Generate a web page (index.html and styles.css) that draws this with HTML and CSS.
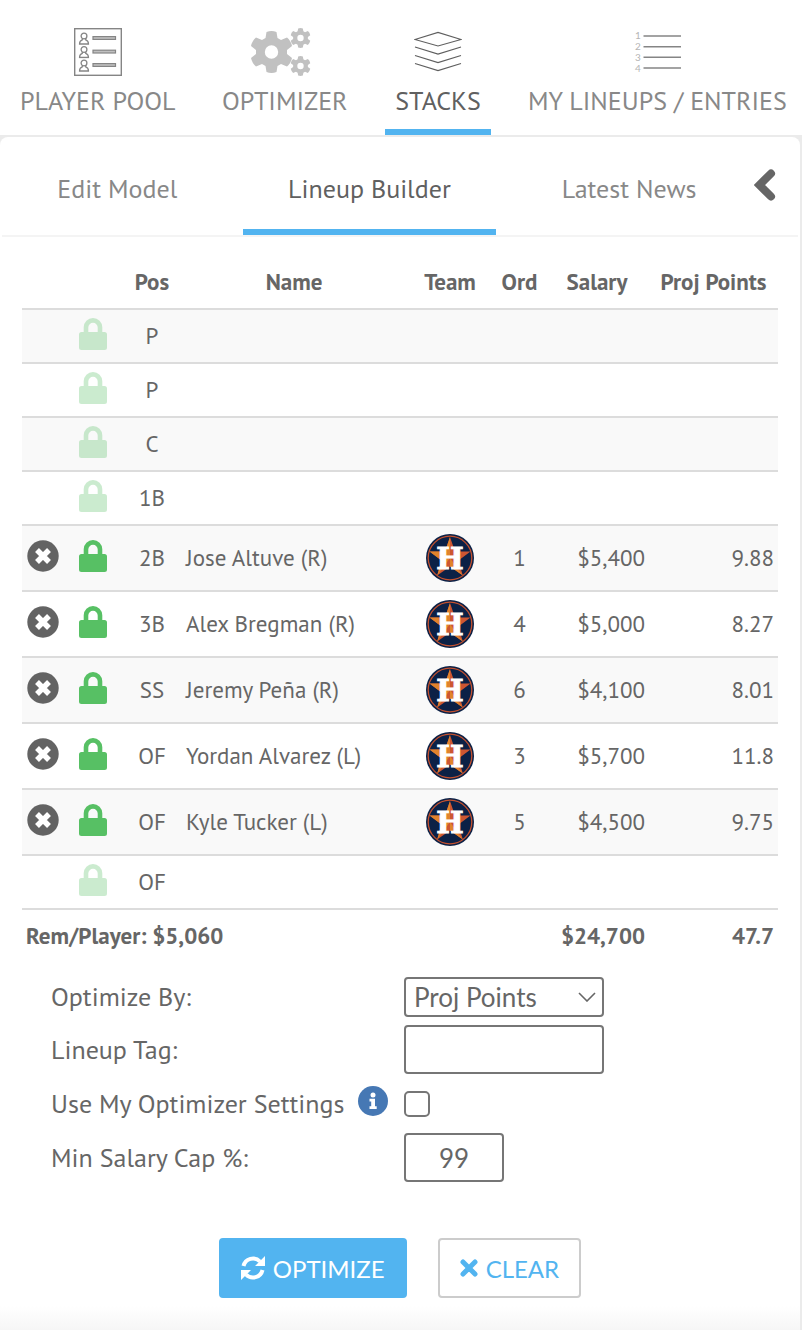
FILE: index.html
```html
<!DOCTYPE html>
<html lang="en">
<head>
    <meta charset="UTF-8">
    <meta name="viewport" content="width=device-width, initial-scale=1.0">
    <title>Stacks - Lineup Builder</title>
    <link rel="stylesheet" href="styles.css">
</head>
<body>
    <!-- Shared icons -->
    <svg class="icon-defs" aria-hidden="true">
        <symbol id="lock" viewBox="0 0 28 32">
            <path d="M2.500 14H4.700V9.300a9.300 9.300 0 0 1 18.600 0V14h2.200A2.500 2.500 0 0 1 28 16.500v13a2.500 2.500 0 0 1-2.500 2.500h-23A2.500 2.500 0 0 1 0 29.500v-13A2.500 2.500 0 0 1 2.500 14zM9.300 14h9.400V9.500a4.700 4.700 0 0 0-9.400 0z"/>
        </symbol>
        <symbol id="remove" viewBox="0 0 32 32">
            <circle cx="16" cy="16" r="15.700"/>
            <path d="M10 10l12 12M22 10l-12 12" stroke="#fff" stroke-width="5.500"/>
        </symbol>
        <symbol id="person" viewBox="0 0 11 13">
            <circle cx="5.500" cy="4" r="2.900"/>
            <path d="M3.800 6.500v1.300C1.800 8.500 1 9.500 1 12h9c0-2.500-.8-3.500-2.800-4.200V6.500"/>
        </symbol>
        <symbol id="gear" viewBox="0 0 40 42">
            <path fill-rule="evenodd" d="M15 1q5-2 10 0l1 6 3.500 2 6-2.500q4 3.500 5 8.500l-5 4v4l5 4q-1 5-5 8.500l-6-2.500-3.500 2-1 6q-5 2-10 0l-1-6-3.500-2-6 2.500q-4-3.500-5-8.500l5-4v-4l-5-4q1-5 5-8.500l6 2.500L14 7zM20 14.300a6.700 6.700 0 1 0 0 13.400 6.700 6.700 0 0 0 0-13.400z"/>
        </symbol>
    </svg>

    <nav class="main-nav">
        <a href="#" class="nav-item">
            <svg width="48" height="48" viewBox="0 0 48 48" fill="none" stroke="#858585">
                <rect x=".7" y=".7" width="46.600" height="46.600" stroke-width="1.400"/>
                <g stroke-width="1.300">
                    <use href="#person" x="4.500" y="4" width="11" height="13"/>
                    <use href="#person" x="4.500" y="17.500" width="11" height="13"/>
                    <use href="#person" x="4.500" y="31" width="11" height="13"/>
                </g>
                <g fill="#c0c0c0" stroke-width="1.200">
                    <rect x="19" y="8.600" width="22.500" height="2.800"/>
                    <rect x="19" y="22.200" width="22.500" height="2.800"/>
                    <rect x="19" y="35.600" width="22.500" height="2.800"/>
                </g>
            </svg>
            <span>PLAYER POOL</span>
        </a>
        <a href="#" class="nav-item">
            <svg width="68" height="48" viewBox="0 0 68 48" fill="#c1c1c1">
                <use href="#gear" x="0" y="3" width="41" height="42"/>
                <use href="#gear" x="39" y="0" width="21" height="20"/>
                <use href="#gear" x="39" y="28" width="21" height="20"/>
            </svg>
            <span>OPTIMIZER</span>
        </a>
        <a href="#" class="nav-item active">
            <svg width="48" height="48" viewBox="0 0 48 48" fill="none" stroke="#5f5f5f" stroke-width="1.200">
                <path d="M1 11.500L24 4.500l23 7-23 6.500zM1 19l23 7 23-7M1 27.500l23 7 23-7M1 35.500l23 7 23-7"/>
            </svg>
            <span>STACKS</span>
        </a>
        <a href="#" class="nav-item">
            <svg width="48" height="48" viewBox="0 0 48 48" stroke="#858585" stroke-width="1.600">
                <path d="M10.500 8H48M10.500 18.700H48M10.500 29.300H48M10.500 40H48"/>
                <g class="list-digits">
                    <text x="2" y="11">1</text>
                    <text x="2" y="22">2</text>
                    <text x="2" y="33">3</text>
                    <text x="2" y="44">4</text>
                </g>
            </svg>
            <span>MY LINEUPS / ENTRIES</span>
        </a>
    </nav>

    <main class="panel">
        <div class="tabs">
            <a href="#" class="tab">Edit Model</a>
            <a href="#" class="tab active">Lineup Builder</a>
            <a href="#" class="tab">Latest News</a>
            <button type="button" class="collapse" aria-label="Collapse panel">
                <svg width="22" height="34" viewBox="0 0 22 34" fill="none" stroke="#666" stroke-width="8">
                    <path d="M17 5.500L5.500 17 17 28.500" stroke-linecap="round"/>
                </svg>
            </button>
        </div>

        <table class="lineup">
            <colgroup>
                <col class="col-remove">
                <col class="col-lock">
                <col class="col-pos">
                <col>
                <col class="col-team">
                <col class="col-ord">
                <col class="col-salary">
                <col class="col-points">
            </colgroup>
            <thead>
                <tr>
                    <th></th>
                    <th></th>
                    <th>Pos</th>
                    <th>Name</th>
                    <th>Team</th>
                    <th>Ord</th>
                    <th>Salary</th>
                    <th>Proj Points</th>
                </tr>
            </thead>
            <tbody id="lineup-rows"></tbody>
            <tfoot>
                <tr>
                    <td colspan="6">Rem/Player: $5,060</td>
                    <td class="num">$24,700</td>
                    <td class="num">47.7</td>
                </tr>
            </tfoot>
        </table>

        <form class="settings">
            <label for="optimize-by">Optimize By:</label>
            <div class="select-wrap">
                <select id="optimize-by">
                    <option>Proj Points</option>
                </select>
                <svg class="caret" width="18" height="10" viewBox="0 0 18 10" fill="none" stroke="#666" stroke-width="1.600">
                    <path d="M1 1l8 8 8-8"/>
                </svg>
            </div>

            <label for="lineup-tag">Lineup Tag:</label>
            <input type="text" id="lineup-tag">

            <div class="label-info">
                <label for="use-settings">Use My Optimizer Settings</label>
                <svg class="info" width="30" height="30" viewBox="0 0 30 30">
                    <circle cx="15" cy="15" r="15" fill="#4678b4"/>
                    <circle cx="15" cy="9" r="2.500" fill="#fff"/>
                    <path d="M11.500 12.800h5.500v7.500h1.700V23h-7.200v-2.700h1.700v-4.800h-1.700z" fill="#fff"/>
                </svg>
            </div>
            <input type="checkbox" id="use-settings">

            <label for="min-salary">Min Salary Cap %:</label>
            <input type="text" id="min-salary" class="short" value="99">
        </form>

        <div class="actions">
            <button type="button" class="btn btn-primary">
                <svg width="24" height="24" viewBox="0 0 24 24" fill="none" stroke="#fff" stroke-width="4">
                    <path d="M2.500 10A9.700 9.700 0 0 1 19 5.500M21.500 14A9.700 9.700 0 0 1 5 18.500"/>
                    <path d="M24 0v10H14zM0 24V14h10z" fill="#fff" stroke="none"/>
                </svg>
                OPTIMIZE
            </button>
            <button type="button" class="btn btn-outline">
                <svg width="18" height="18" viewBox="0 0 18 18" fill="none" stroke="#52b4f0" stroke-width="5">
                    <path d="M3 3l12 12M15 3L3 15" stroke-linecap="round"/>
                </svg>
                CLEAR
            </button>
        </div>
    </main>

    <script>
        const lineup = [
            { pos: 'P' },
            { pos: 'P' },
            { pos: 'C' },
            { pos: '1B' },
            { pos: '2B', name: 'Jose Altuve (R)', ord: 1, salary: '$5,400', points: '9.88' },
            { pos: '3B', name: 'Alex Bregman (R)', ord: 4, salary: '$5,000', points: '8.27' },
            { pos: 'SS', name: 'Jeremy Peña (R)', ord: 6, salary: '$4,100', points: '8.01' },
            { pos: 'OF', name: 'Yordan Alvarez (L)', ord: 3, salary: '$5,700', points: '11.8' },
            { pos: 'OF', name: 'Kyle Tucker (L)', ord: 5, salary: '$4,500', points: '9.75' },
            { pos: 'OF' }
        ];

        const removeButton = '<button type="button" class="icon-btn remove" aria-label="Remove player"><svg width="32" height="32"><use href="#remove"/></svg></button>';
        const lockButton = '<button type="button" class="icon-btn lock" aria-label="Lock player"><svg width="28" height="32"><use href="#lock"/></svg></button>';
        const teamLogo = `
            <svg class="team-logo" width="48" height="48" viewBox="0 0 48 48" role="img" aria-label="Houston Astros">
                <circle cx="24" cy="24" r="24" fill="#0c2146"/>
                <circle cx="24" cy="24" r="21.800" fill="none" stroke="#c4512f" stroke-width="1.300"/>
                <path d="M24 3l5 14.500h15.500L32.500 26.500l4.300 15L24 32.500l-12.800 9 4.300-15L3.500 17.500H19z" fill="#cd5632"/>
                <path d="M24 3v21L19 17.500zM3.500 17.500H19l5 6.500-8.500 2.500zM11.200 41.500l4.300-15L24 24zM24 32.500V24l12.800 17.500z" fill="#e0832c"/>
                <text x="24" y="35" text-anchor="middle" class="logo-letter">H</text>
            </svg>`;

        document.getElementById('lineup-rows').innerHTML = lineup.map(p => `
            <tr class="${p.name ? 'filled' : 'empty'}">
                <td>${p.name ? removeButton : ''}</td>
                <td>${lockButton}</td>
                <td>${p.pos}</td>
                <td class="name">${p.name || ''}</td>
                <td>${p.name ? teamLogo : ''}</td>
                <td>${p.ord || ''}</td>
                <td class="num">${p.salary || ''}</td>
                <td class="num">${p.points || ''}</td>
            </tr>
        `).join('');
    </script>
</body>
</html>
```

FILE: styles.css
```css
* {
    margin: 0;
    padding: 0;
    box-sizing: border-box;
}

body {
    font-family: 'PT Sans', Lato, sans-serif;
    font-size: 26px;
    color: #666;
    background: #ebebeb;
    min-height: 100vh;
    display: flex;
    flex-direction: column;
}

a {
    color: #888;
    text-decoration: none;
}

svg {
    display: block;
}

button {
    cursor: pointer;
}

.icon-defs {
    position: absolute;
    width: 0;
    height: 0;
}

.logo-letter {
    font: bold 29px 'DejaVu Serif', serif;
    fill: #fff;
    stroke: #fff;
    stroke-width: 1px;
}

/* Top navigation */
.main-nav {
    display: grid;
    grid-template-columns: 174fr 145fr 106fr 278fr;
    gap: 28px;
    padding: 28px 6px 0 11px;
    background: #fff;
}

.nav-item {
    display: flex;
    flex-direction: column;
    align-items: center;
    gap: 8px;
    height: 107px;
    line-height: 34px;
    white-space: nowrap;
}

.nav-item.active,
.tab.active {
    color: #606060;
    border-bottom: 6px solid #52b4f0;
}

.list-digits {
    font: 10px Lato, sans-serif;
    fill: #b5b5b5;
    stroke: none;
}

/* Panel */
.panel {
    flex: 1;
    margin: 2px 2px 0 0;
    background: linear-gradient(to top, #f6f6f6, #fff 24px);
    border-radius: 8px 8px 0 0;
}

.tabs {
    display: grid;
    grid-template-columns: 210fr 253fr 225fr 36fr;
    column-gap: 20px;
    height: 100px;
    margin: 0 2px;
    padding-left: 10px;
    border-bottom: 2px solid #f4f4f4;
}

.tab {
    padding-top: 36px;
    line-height: 32px;
    text-align: center;
    white-space: nowrap;
}

.collapse {
    align-self: start;
    margin-top: 31px;
    margin-left: -8px;
    background: none;
    border: none;
}

/* Lineup table */
.lineup {
    width: calc(100% - 44px);
    margin: 21px 22px 0;
    table-layout: fixed;
    border-collapse: separate;
    border-spacing: 0;
    font-size: 23px;
    line-height: 28px;
    text-align: center;
}

.col-remove {
    width: 42px;
}

.col-lock {
    width: 58px;
}

.col-pos {
    width: 60px;
}

.col-team {
    width: 88px;
}

.col-ord {
    width: 51px;
}

.col-salary {
    width: 104px;
}

.col-points {
    width: 129px;
}

.lineup th,
.lineup tbody td {
    border-bottom: 2px solid #dcdcdc;
}

.lineup th {
    height: 52px;
    padding-bottom: 2px;
    white-space: nowrap;
}

.lineup td {
    padding: 0 4px;
    vertical-align: middle;
}

.lineup tbody tr:nth-child(odd) {
    background: #f9f9f9;
}

.lineup .empty td {
    height: 54px;
}

.lineup .filled td {
    height: 66px;
}

.lineup .name {
    text-align: left;
}

.lineup .num {
    text-align: right;
}

.lineup tfoot td {
    height: 51px;
    font-weight: bold;
}

.lineup tfoot td:first-child {
    text-align: left;
}

.icon-btn {
    display: block;
    margin: 0 auto;
    padding-bottom: 4px;
    background: none;
    border: none;
}

.remove {
    fill: #636363;
}

.lock {
    fill: #57c064;
}

.empty .lock {
    opacity: 0.3;
}

.team-logo {
    margin: 0 auto;
}

/* Optimizer settings */
.settings {
    display: grid;
    grid-template-columns: 353px 200px;
    row-gap: 8px;
    align-items: center;
    margin-top: 16px;
    padding-left: 51px;
    line-height: 34px;
}

.settings select,
.settings input {
    width: 200px;
    height: 49px;
    padding: 0 8px;
    font: 26px Lato, sans-serif;
    color: #666;
    background: #fff;
    border: 2px solid #767676;
    border-radius: 4px;
    appearance: none;
}

.settings select {
    display: block;
    height: 40px;
}

.settings .short {
    width: 100px;
    text-align: center;
}

.settings input[type="checkbox"] {
    width: 26px;
    height: 26px;
    border-radius: 5px;
}

.select-wrap {
    position: relative;
}

.caret {
    position: absolute;
    top: 15px;
    right: 8px;
    pointer-events: none;
}

.label-info {
    display: flex;
    align-items: center;
    gap: 14px;
    height: 43px;
}

.info {
    margin-bottom: 6px;
}

/* Buttons */
.actions {
    display: flex;
    justify-content: center;
    gap: 31px;
    margin: 56px 0 32px;
}

.btn {
    display: flex;
    align-items: center;
    justify-content: center;
    gap: 8px;
    height: 60px;
    padding: 0 20px;
    font: 24px Lato, sans-serif;
    border: 2px solid #52b4f0;
    border-radius: 4px;
}

.btn-primary {
    color: #fff;
    background: #52b4f0;
}

.btn-outline {
    color: #52b4f0;
    background: #fff;
    border-color: #ccc;
}
```
